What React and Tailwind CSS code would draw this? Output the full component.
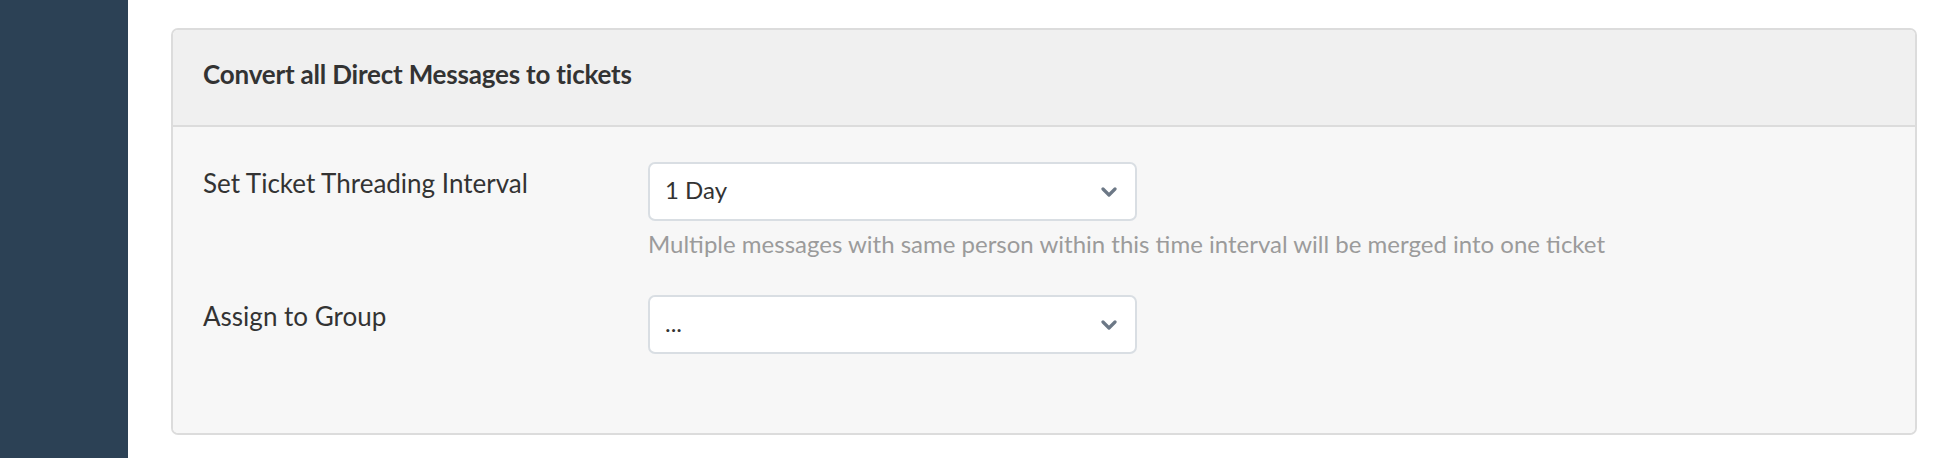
import React from 'react';

function Chevron() {
    return (
        <svg width="16" height="10" viewBox="0 0 16 10" className="flex-shrink-0">
            <path d="M2 2 L8 8 L14 2" fill="none" stroke="#6c7886" strokeWidth="3.2" strokeLinecap="round" strokeLinejoin="round" />
        </svg>
    );
}

function Select({ value }) {
    return (
        <div className="w-[489px] h-[59px] bg-white border-2 border-[#d9dee3] rounded-[7px] flex items-center justify-between pl-[15px] pr-[18px]">
            <span className="text-[24px] text-[#333] mb-[4px]">{value}</span>
            <Chevron />
        </div>
    );
}

export default function App() {
    return (
        <div className="w-[1938px] h-[458px] flex bg-white" style={{ fontFamily: 'Lato, "Noto Sans", sans-serif' }}>
            {/* Sidebar */}
            <div className="w-[128px] h-full bg-[#2c4155] flex-shrink-0" />

            {/* Main */}
            <div className="flex-1 pl-[43px] pt-[28px] pr-[21px]">
                <div className="border-2 border-[#dcdcdc] rounded-[7px] overflow-hidden">
                    <div className="h-[97px] bg-[#f0f0f0] border-b-2 border-[#dcdcdc] px-[30px] pb-[7px] flex items-center">
                        <h2 className="text-[26px] font-bold text-[#333] tracking-[-0.2px]">Convert all Direct Messages to tickets</h2>
                    </div>
                    <div className="bg-[#f7f7f7] px-[30px] pt-[35px] pb-[79px]">
                        <div className="grid grid-cols-[445px_1fr] gap-y-[36px]">
                            <div className="text-[26px] leading-[30px] text-[#333] pt-[6px]">Set Ticket Threading Interval</div>
                            <div>
                                <Select value="1 Day" />
                                <p className="mt-[8px] text-[24px] leading-[30px] text-[#9b9b9b]">
                                    Multiple messages with same person within this time interval will be merged into one ticket
                                </p>
                            </div>
                            <div className="text-[26px] leading-[30px] text-[#333] pt-[6px]">Assign to Group</div>
                            <div>
                                <Select value="..." />
                            </div>
                        </div>
                    </div>
                </div>
            </div>
        </div>
    );
}
